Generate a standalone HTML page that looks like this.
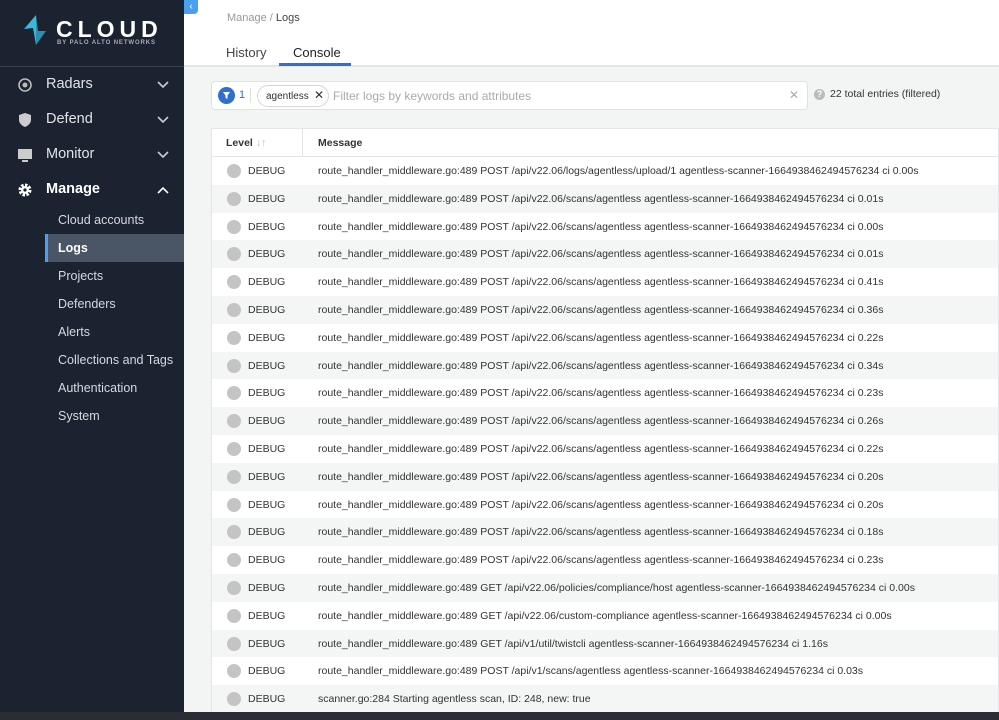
<!DOCTYPE html>
<html><head><meta charset="utf-8"><style>
*{box-sizing:border-box;margin:0;padding:0}
body{width:999px;height:720px;overflow:hidden;font-family:"Liberation Sans",sans-serif;background:#f3f4f4;position:relative}
.sb{position:absolute;left:0;top:0;width:184px;height:720px;background:#1b2230;color:#d6d9de}
.logo{height:67px;border-bottom:1px solid #3a4252;position:relative}
.nav{position:absolute;left:0;width:184px;font-size:14.5px;color:#e2e4e8}
.nav .ic{position:absolute;left:18px;top:-7px;width:14px;height:14px}
.nav .t{position:absolute;left:46px;top:-9px}
.nav .ch{position:absolute;left:157px;top:-4px}
.sub{position:absolute;left:58px;font-size:12.5px;color:#d6d9de}
.hl{position:absolute;left:45px;top:234px;width:139px;height:28px;background:#4a5566;border-left:3px solid #4a9ff0}
.top{position:absolute;left:184px;top:0;width:815px;height:67px;background:#fff;border-bottom:2px solid #e3e5e7}
.tog{position:absolute;left:184px;top:0;width:14px;height:14px;background:#4a9ff0;border-radius:0 0 4px 0;color:#fff;font-size:10px;text-align:center;line-height:13px}
.bc{position:absolute;left:227px;top:12px;font-size:11px;color:#999}
.bc b{color:#444;font-weight:normal}
.tab{position:absolute;top:45px;font-size:13px;color:#444}
.ul{position:absolute;left:279px;top:63px;width:72px;height:3px;background:#2f6fd0}
.fb{position:absolute;left:211px;top:81px;width:597px;height:29px;background:#fff;border:1px solid #dfe1e3;border-radius:4px}
.tbl{position:absolute;left:211px;top:128px;width:788px;background:#fff;border:1px solid #e3e5e7}
.row{height:27.8px;position:relative;font-size:10.5px;color:#333}
.row .d{position:absolute;left:15px;top:7px;width:14px;height:14px;border-radius:50%;background:#c4c4c4}
.row .l{position:absolute;left:36px;top:8px}
.row .m{position:absolute;left:106px;top:8px;white-space:nowrap}
.hd{height:28px;position:relative;font-size:10.5px;font-weight:bold;color:#333;border-bottom:1px solid #e3e5e7}
.bot{position:absolute;left:0;top:712px;width:999px;height:8px;background:#2a2d33}
</style></head><body>
<div class="sb">
 <div class="logo">
  <svg style="position:absolute;left:24px;top:15px" width="22" height="30" viewBox="0 0 22 30"><polygon points="12,0 0,14 9,13 12,30" fill="#3ab8d8"/><polygon points="12,0 12,30 22,16 14,16" fill="#2a8fb0"/></svg>
  <div style="position:absolute;left:56px;top:16px;font-size:23px;letter-spacing:5px;color:#fff;font-weight:bold">CLOUD</div>
  <div style="position:absolute;left:57px;top:40px;font-size:6px;letter-spacing:0.9px;color:#aab;font-weight:bold">BY PALO ALTO NETWORKS</div>
 </div>
 <div class="nav" style="top:85px"><svg class="ic" viewBox="0 0 14 14"><circle cx="7" cy="7" r="6" fill="none" stroke="#bbb" stroke-width="1.6"/><circle cx="7" cy="7" r="2.5" fill="#bbb"/></svg><span class="t">Radars</span><svg class="ch" width="12" height="8" viewBox="0 0 12 8"><polyline points="1,1 6,6 11,1" fill="none" stroke="#ccc" stroke-width="1.6"/></svg></div>
 <div class="nav" style="top:120px"><svg class="ic" viewBox="0 0 14 14"><path d="M7 0L13 2V7C13 10 10 13 7 14C4 13 1 10 1 7V2Z" fill="#ccc"/></svg><span class="t">Defend</span><svg class="ch" width="12" height="8" viewBox="0 0 12 8"><polyline points="1,1 6,6 11,1" fill="none" stroke="#ccc" stroke-width="1.6"/></svg></div>
 <div class="nav" style="top:155px"><svg class="ic" viewBox="0 0 14 14"><rect x="0" y="1" width="14" height="10" fill="#ccc"/><rect x="4" y="12" width="6" height="2" fill="#ccc"/></svg><span class="t">Monitor</span><svg class="ch" width="12" height="8" viewBox="0 0 12 8"><polyline points="1,1 6,6 11,1" fill="none" stroke="#ccc" stroke-width="1.6"/></svg></div>
 <div class="nav" style="top:190px;font-weight:bold;color:#fff"><svg class="ic" viewBox="0 0 14 14"><circle cx="7" cy="7" r="5" fill="none" stroke="#fff" stroke-width="3" stroke-dasharray="2.5 1.4"/><circle cx="7" cy="7" r="4" fill="#fff"/><circle cx="7" cy="7" r="1.6" fill="#1b2230"/></svg><span class="t">Manage</span><svg class="ch" width="12" height="8" viewBox="0 0 12 8"><polyline points="1,7 6,2 11,7" fill="none" stroke="#fff" stroke-width="1.6"/></svg></div>
 <div class="hl"></div>
 <div class="sub" style="top:213px">Cloud accounts</div>
 <div class="sub" style="top:241px;color:#fff;font-weight:bold">Logs</div>
 <div class="sub" style="top:269px">Projects</div>
 <div class="sub" style="top:297px">Defenders</div>
 <div class="sub" style="top:325px">Alerts</div>
 <div class="sub" style="top:353px">Collections and Tags</div>
 <div class="sub" style="top:381px">Authentication</div>
 <div class="sub" style="top:409px">System</div>
</div>
<div class="top"></div>
<div class="tog">&#8249;</div>
<div class="bc">Manage / <b>Logs</b></div>
<div class="tab" style="left:226px">History</div>
<div class="tab" style="left:293px;color:#222">Console</div>
<div class="ul"></div>
<div class="fb">
 <div style="position:absolute;left:6px;top:5px;width:17px;height:17px;border-radius:50%;background:#2f6fd0"><svg width="17" height="17" viewBox="0 0 17 17"><path d="M5 5H12L9.5 8.5V12L7.5 11V8.5Z" fill="#fff"/></svg></div>
 <div style="position:absolute;left:27px;top:7px;font-size:11px;color:#2f6fd0">1</div>
 <div style="position:absolute;left:38px;top:6px;width:1px;height:15px;background:#ddd"></div>
 <div style="position:absolute;left:45px;top:3px;height:22px;width:72px;border:1px solid #d5d7da;border-radius:11px;font-size:10px;color:#333;padding:5px 0 0 8px">agentless <span style="font-size:12px;position:absolute;left:56px;top:2px">&#10005;</span></div>
 <div style="position:absolute;left:121px;top:7px;font-size:12px;color:#aaa">Filter logs by keywords and attributes</div>
 <div style="position:absolute;left:577px;top:6px;font-size:12px;color:#aaa">&#10005;</div>
</div>
<div style="position:absolute;left:814px;top:89px;width:11px;height:11px;border-radius:50%;background:#bbb;color:#fff;font-size:9px;text-align:center;line-height:11px;font-weight:bold">?</div>
<div style="position:absolute;left:830px;top:88px;font-size:10.5px;color:#333">22 total entries (filtered)</div>
<div class="tbl">
 <div class="hd"><span style="position:absolute;left:14px;top:8px">Level <span style="color:#bbb;font-weight:normal">&#8595;&#8593;</span></span><div style="position:absolute;left:90px;top:0;width:1px;height:28px;background:#e3e5e7"></div><span style="position:absolute;left:106px;top:8px">Message</span></div>
 <div>
 <div class="row" style="background:#fff"><i class="d"></i><span class="l">DEBUG</span><span class="m">route_handler_middleware.go:489 POST /api/v22.06/logs/agentless/upload/1 agentless-scanner-1664938462494576234 ci 0.00s</span></div>
 <div class="row" style="background:#f4f5f5"><i class="d"></i><span class="l">DEBUG</span><span class="m">route_handler_middleware.go:489 POST /api/v22.06/scans/agentless agentless-scanner-1664938462494576234 ci 0.01s</span></div>
 <div class="row" style="background:#fff"><i class="d"></i><span class="l">DEBUG</span><span class="m">route_handler_middleware.go:489 POST /api/v22.06/scans/agentless agentless-scanner-1664938462494576234 ci 0.00s</span></div>
 <div class="row" style="background:#f4f5f5"><i class="d"></i><span class="l">DEBUG</span><span class="m">route_handler_middleware.go:489 POST /api/v22.06/scans/agentless agentless-scanner-1664938462494576234 ci 0.01s</span></div>
 <div class="row" style="background:#fff"><i class="d"></i><span class="l">DEBUG</span><span class="m">route_handler_middleware.go:489 POST /api/v22.06/scans/agentless agentless-scanner-1664938462494576234 ci 0.41s</span></div>
 <div class="row" style="background:#f4f5f5"><i class="d"></i><span class="l">DEBUG</span><span class="m">route_handler_middleware.go:489 POST /api/v22.06/scans/agentless agentless-scanner-1664938462494576234 ci 0.36s</span></div>
 <div class="row" style="background:#fff"><i class="d"></i><span class="l">DEBUG</span><span class="m">route_handler_middleware.go:489 POST /api/v22.06/scans/agentless agentless-scanner-1664938462494576234 ci 0.22s</span></div>
 <div class="row" style="background:#f4f5f5"><i class="d"></i><span class="l">DEBUG</span><span class="m">route_handler_middleware.go:489 POST /api/v22.06/scans/agentless agentless-scanner-1664938462494576234 ci 0.34s</span></div>
 <div class="row" style="background:#fff"><i class="d"></i><span class="l">DEBUG</span><span class="m">route_handler_middleware.go:489 POST /api/v22.06/scans/agentless agentless-scanner-1664938462494576234 ci 0.23s</span></div>
 <div class="row" style="background:#f4f5f5"><i class="d"></i><span class="l">DEBUG</span><span class="m">route_handler_middleware.go:489 POST /api/v22.06/scans/agentless agentless-scanner-1664938462494576234 ci 0.26s</span></div>
 <div class="row" style="background:#fff"><i class="d"></i><span class="l">DEBUG</span><span class="m">route_handler_middleware.go:489 POST /api/v22.06/scans/agentless agentless-scanner-1664938462494576234 ci 0.22s</span></div>
 <div class="row" style="background:#f4f5f5"><i class="d"></i><span class="l">DEBUG</span><span class="m">route_handler_middleware.go:489 POST /api/v22.06/scans/agentless agentless-scanner-1664938462494576234 ci 0.20s</span></div>
 <div class="row" style="background:#fff"><i class="d"></i><span class="l">DEBUG</span><span class="m">route_handler_middleware.go:489 POST /api/v22.06/scans/agentless agentless-scanner-1664938462494576234 ci 0.20s</span></div>
 <div class="row" style="background:#f4f5f5"><i class="d"></i><span class="l">DEBUG</span><span class="m">route_handler_middleware.go:489 POST /api/v22.06/scans/agentless agentless-scanner-1664938462494576234 ci 0.18s</span></div>
 <div class="row" style="background:#fff"><i class="d"></i><span class="l">DEBUG</span><span class="m">route_handler_middleware.go:489 POST /api/v22.06/scans/agentless agentless-scanner-1664938462494576234 ci 0.23s</span></div>
 <div class="row" style="background:#f4f5f5"><i class="d"></i><span class="l">DEBUG</span><span class="m">route_handler_middleware.go:489 GET /api/v22.06/policies/compliance/host agentless-scanner-1664938462494576234 ci 0.00s</span></div>
 <div class="row" style="background:#fff"><i class="d"></i><span class="l">DEBUG</span><span class="m">route_handler_middleware.go:489 GET /api/v22.06/custom-compliance agentless-scanner-1664938462494576234 ci 0.00s</span></div>
 <div class="row" style="background:#f4f5f5"><i class="d"></i><span class="l">DEBUG</span><span class="m">route_handler_middleware.go:489 GET /api/v1/util/twistcli agentless-scanner-1664938462494576234 ci 1.16s</span></div>
 <div class="row" style="background:#fff"><i class="d"></i><span class="l">DEBUG</span><span class="m">route_handler_middleware.go:489 POST /api/v1/scans/agentless agentless-scanner-1664938462494576234 ci 0.03s</span></div>
 <div class="row" style="background:#f4f5f5"><i class="d"></i><span class="l">DEBUG</span><span class="m">scanner.go:284 Starting agentless scan, ID: 248, new: true</span></div>
 </div>
</div>
<div class="bot"></div>
</body></html>
